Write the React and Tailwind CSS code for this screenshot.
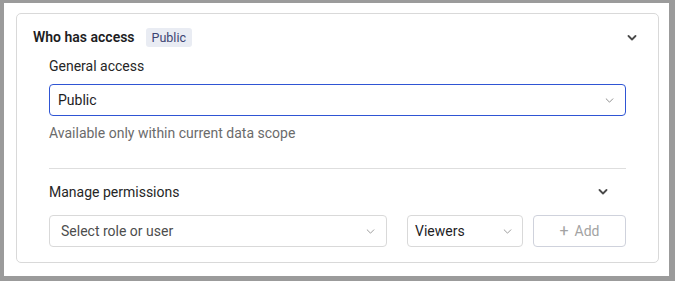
import React from "react";

const Chevron = ({ className = "" }) => (
  <svg viewBox="0 0 10 6" className={className} fill="none" stroke="currentColor" strokeWidth="1" strokeLinecap="round" strokeLinejoin="round">
    <path d="M1 1l4 4 4-4" />
  </svg>
);

const BoldChevron = ({ className = "" }) => (
  <svg viewBox="0 0 10 6" className={className} fill="none" stroke="currentColor" strokeWidth="1.8" strokeLinecap="round" strokeLinejoin="round">
    <path d="M1.5 1l3.5 3.5L8.5 1" />
  </svg>
);

const App = () => {
  return (
    <div className="w-[675px] h-[281px] bg-[#9b9b9b] pt-[3px] pl-[4px] pr-[6px] pb-[5px] font-['Roboto',sans-serif]">
      <div className="h-full bg-white pt-[10px] pl-[12px] pr-[10px] pb-[13px]">
        <div className="h-full rounded-[5px] border border-[#d9d9d9] pl-[16px] pr-[21px]">
          <div className="flex items-center h-[46px] pt-[1px]">
            <span className="text-[14px] font-semibold text-[#1d1d1f]">Who has access</span>
            <span className="ml-[11px] rounded-[3px] bg-[#e9ecf3] px-[6px] h-[19px] leading-[19px] text-[12.5px] text-[#3c4472]">Public</span>
            <BoldChevron className="ml-auto w-[10px] h-[6px] text-[#4a4a4a]" />
          </div>
          <div className="pl-[16px] pr-[11px]">
            <div className="text-[14px] text-[#262626] leading-[20px] mt-[-4px]">General access</div>
            <div className="mt-[8px] flex items-center h-[32px] rounded-[4px] border border-[#2f55d4] px-[8px]">
              <span className="text-[14px] text-[#1d1d1f]">Public</span>
              <Chevron className="ml-auto w-[9px] h-[5px] text-[#7a7a7a] mr-[3px]" />
            </div>
            <div className="mt-[7px] text-[14px] text-[#6b6b6b] leading-[20px]">Available only within current data scope</div>
            <div className="mt-[25px] border-t border-[#dedede]"></div>
            <div className="flex items-center h-[46px]">
              <span className="text-[14px] text-[#262626]">Manage permissions</span>
              <BoldChevron className="ml-auto mr-[18px] w-[10px] h-[6px] text-[#4a4a4a]" />
            </div>
            <div className="flex items-center gap-[10px]">
              <div className="flex items-center h-[32px] w-[338px] rounded-[4px] border border-[#d9d9d9] px-[11px]">
                <span className="text-[14px] text-[#4d4d4d]">Select role or user</span>
                <Chevron className="ml-auto w-[9px] h-[5px] text-[#8a8a8a]" />
              </div>
              <div className="ml-[10px] flex items-center h-[32px] w-[116px] rounded-[4px] border border-[#d9d9d9] px-[7px]">
                <span className="text-[14px] text-[#1d1d1f]">Viewers</span>
                <Chevron className="ml-auto mr-[3px] w-[9px] h-[5px] text-[#8a8a8a]" />
              </div>
              <div className="flex-1 flex items-center justify-center h-[32px] rounded-[4px] border border-[#cfd2dc] text-[14px] text-[#a3a3a3]">
                <span className="mr-[6px] text-[16px] leading-none">+</span>Add
              </div>
            </div>
          </div>
        </div>
      </div>
    </div>
  );
};

export default App;
